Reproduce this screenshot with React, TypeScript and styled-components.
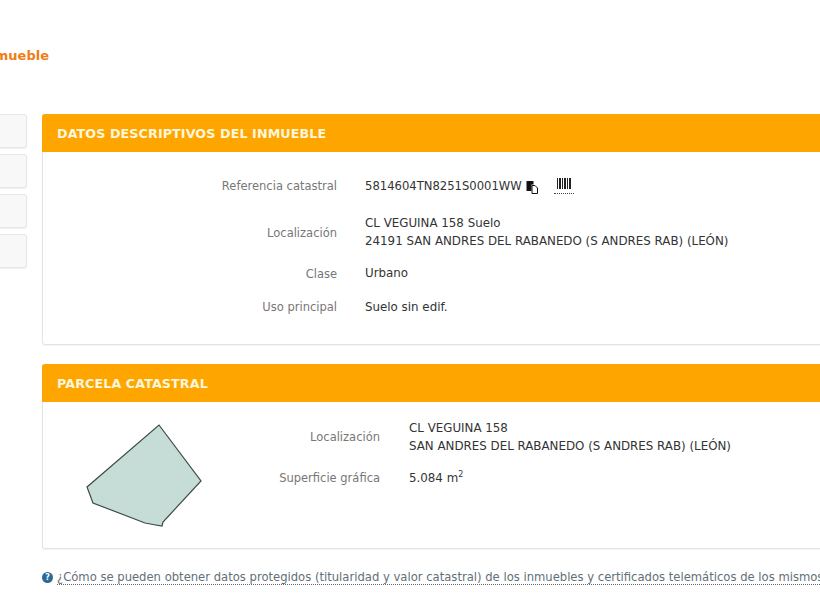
import React, { FC } from "react";
import styled, { createGlobalStyle } from "styled-components";

const GlobalStyle = createGlobalStyle`
  html, body {
    margin: 0;
    padding: 0;
    background: #fff;
    overflow: hidden;
    font-family: "DejaVu Sans", Verdana, sans-serif;
  }
`;

const Page = styled.div`
  width: 820px;
  height: 615px;
  overflow: hidden;
`;

const Wrapper = styled.div`
  width: 1100px;
  margin-left: -113px;
`;

const Title = styled.h1`
  margin: 0;
  padding: 47px 0 0 20px;
  height: 114px;
  box-sizing: border-box;
  font-size: 13px;
  line-height: 18px;
  font-weight: 700;
  color: #f07d14;
`;

const Columns = styled.div`
  display: flex;
  gap: 15px;
  align-items: flex-start;
`;

const Sidebar = styled.div`
  width: 140px;
  display: flex;
  flex-direction: column;
  gap: 6px;
`;

const SideItem = styled.div`
  height: 34px;
  box-sizing: border-box;
  background: #f8f8f8;
  border: 1px solid #e6e6e6;
  border-radius: 3px;
  box-shadow: 0 1px 1px rgba(0, 0, 0, 0.06);
`;

const Main = styled.div`
  width: 945px;
`;

const Panel = styled.section<{ $height: number }>`
  height: ${(p) => p.$height}px;
  box-sizing: border-box;
  margin-bottom: 19px;
  background: #fff;
  border: 1px solid #e4e4e4;
  border-top: none;
  border-radius: 3px;
  box-shadow: 0 1px 1px rgba(0, 0, 0, 0.05);
`;

const PanelHeader = styled.h2`
  margin: 0 -1px;
  height: 38px;
  padding: 0 15px;
  display: flex;
  align-items: center;
  background: #ffa500;
  border-radius: 3px 3px 0 0;
  color: #fff6dc;
  font-size: 12.7px;
  font-weight: 700;
  letter-spacing: 0.1px;
`;

const Rows = styled.div<{ $labelWidth: number; $top: number; $columnGap: number }>`
  display: grid;
  grid-template-columns: ${(p) => p.$labelWidth}px 1fr;
  column-gap: ${(p) => p.$columnGap}px;
  align-content: start;
  padding-top: ${(p) => p.$top}px;
  line-height: 18px;
`;

const Label = styled.div<{ $gap: number }>`
  font-size: 11.5px;
  text-align: right;
  color: #777;
  align-self: center;
  margin-bottom: ${(p) => p.$gap}px;
`;

const Value = styled.div<{ $gap: number; $lift?: number }>`
  font-size: 11.85px;
  color: #333;
  margin-top: ${(p) => -(p.$lift ?? 0)}px;
  margin-bottom: ${(p) => p.$gap + (p.$lift ?? 0)}px;
`;

const RefRow = styled.div`
  display: flex;
  align-items: flex-start;
`;

const RefCode = styled.span`
  font-size: 11.6px;
  padding-top: 1px;
`;

const CopyGlyph = styled.svg`
  display: block;
  flex: none;
  margin: 5px 0 0 4px;
`;

const BarcodeLink = styled.span`
  display: flex;
  justify-content: center;
  box-sizing: border-box;
  width: 20px;
  height: 16px;
  margin: 2px 0 0 16px;
  border-bottom: 1px dotted #444;
`;

const Superscript = styled.sup`
  font-size: 8px;
  line-height: 0;
`;

const ParcelBody = styled.div`
  display: flex;
`;

const ParcelFigure = styled.svg`
  display: block;
  flex: none;
  width: 130px;
  height: 146px;
  margin-left: 29px;
`;

const HelpLine = styled.div`
  display: flex;
  align-items: center;
  gap: 4px;
  padding-top: 2px;
  white-space: nowrap;
  font-size: 11.6px;
  line-height: 18px;
  color: #5f6f78;
`;

const HelpIcon = styled.span`
  flex: none;
  width: 11px;
  height: 11px;
  border-radius: 50%;
  background: #2a6a96;
  color: #fff;
  font-size: 8px;
  font-weight: 700;
  line-height: 11px;
  text-align: center;
`;

const HelpLink = styled.span`
  border-bottom: 1px dotted #666;
  line-height: 14px;
`;

const CopyIcon: FC = () => (
  <CopyGlyph width="12" height="13" viewBox="0 0 12 13">
    <path d="M0.5 0h7v3.5H5.5v6.5h-5z" fill="#111" />
    <path d="M6 4.5h3l2.5 2.5v5.5H6z" fill="#fff" stroke="#111" strokeWidth="1" />
  </CopyGlyph>
);

const BarcodeIcon: FC = () => (
  <svg width="14" height="11" viewBox="0 0 14 11">
    <path
      d="M0 0h1v11H0zM2 0h2v11H2zM5 0h1v11H5zM7 0h2v11H7zM10 0h1v11h-1zM12 0h2v11h-2z"
      fill="#222"
    />
  </svg>
);

const App: FC = () => (
  <Page>
    <GlobalStyle />
    <Wrapper>
      <Title>Datos del inmueble</Title>
      <Columns>
        <Sidebar>
          <SideItem />
          <SideItem />
          <SideItem />
          <SideItem />
        </Sidebar>
        <Main>
          <Panel $height={231}>
            <PanelHeader>DATOS DESCRIPTIVOS DEL INMUEBLE</PanelHeader>
            <Rows $labelWidth={294} $top={24} $columnGap={28}>
              <Label $gap={20}>Referencia catastral</Label>
              <Value $gap={20}>
                <RefRow>
                  <RefCode>5814604TN8251S0001WW</RefCode>
                  <CopyIcon />
                  <BarcodeLink>
                    <BarcodeIcon />
                  </BarcodeLink>
                </RefRow>
              </Value>
              <Label $gap={14}>Localización</Label>
              <Value $gap={14} $lift={1}>
                CL VEGUINA 158 Suelo
                <br />
                24191 SAN ANDRES DEL RABANEDO (S ANDRES RAB) (LEÓN)
              </Value>
              <Label $gap={15}>Clase</Label>
              <Value $gap={15} $lift={1}>Urbano</Value>
              <Label $gap={0}>Uso principal</Label>
              <Value $gap={0}>Suelo sin edif.</Value>
            </Rows>
          </Panel>
          <Panel $height={185}>
            <PanelHeader>PARCELA CATASTRAL</PanelHeader>
            <ParcelBody>
              <ParcelFigure viewBox="72 402 130 146">
                <path
                  d="M159 425L201 481L163 522L162 526L153 524.5L145 523L93 503L87 487Z"
                  fill="#c5ddd6"
                  stroke="#3c4a46"
                  strokeWidth="1.2"
                />
              </ParcelFigure>
              <Rows $labelWidth={178} $top={17} $columnGap={29}>
                <Label $gap={14}>Localización</Label>
                <Value $gap={14}>
                  CL VEGUINA 158
                  <br />
                  SAN ANDRES DEL RABANEDO (S ANDRES RAB) (LEÓN)
                </Value>
                <Label $gap={0}>Superficie gráfica</Label>
                <Value $gap={0}>
                  5.084 m<Superscript>2</Superscript>
                </Value>
              </Rows>
            </ParcelBody>
          </Panel>
          <HelpLine>
            <HelpIcon>?</HelpIcon>
            <HelpLink>
              ¿Cómo se pueden obtener datos protegidos (titularidad y valor catastral) de los inmuebles y certificados telemáticos de los mismos?
            </HelpLink>
          </HelpLine>
        </Main>
      </Columns>
    </Wrapper>
  </Page>
);

export default App;
